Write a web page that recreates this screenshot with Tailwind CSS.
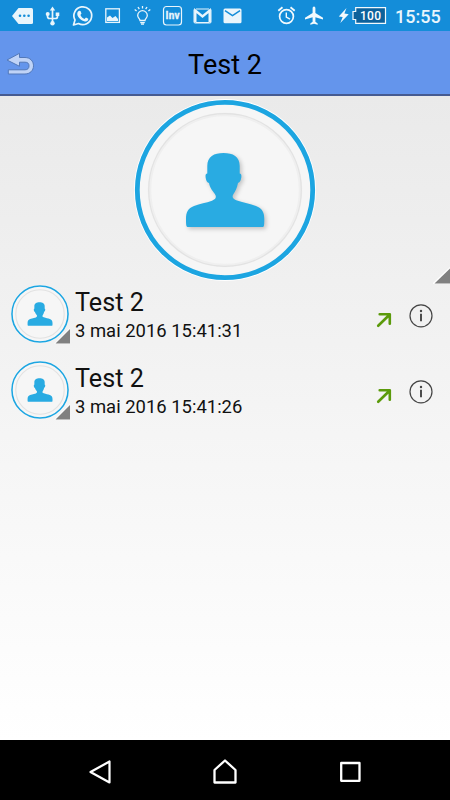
<!DOCTYPE html>
<html lang="fr">
<head>
<meta charset="utf-8">
<title>Test 2</title>
<script src="https://cdn.jsdelivr.net/npm/@tailwindcss/browser@4"></script>
</head>
<body class="w-[450px] h-[800px] overflow-hidden flex flex-col font-[Roboto,sans-serif] text-black">
<svg class="hidden">
  <defs>
    <path id="person" d="M98.500 63C89 63 82.300 66.500 82.300 76L82.300 83.500C80.500 83.500 80.300 85.500 80.700 88C81.200 91 82.200 92.800 84 93C85 98 87 100 89.500 103.500C92 107 91 109 87 110.700C81 113 75 113.500 69 116C63 118.500 61 122 61 129C61 133 61 137 62.500 137H138C139.300 137 139.300 133 139.300 129C139.300 122 137 118.500 131 116C125 113.500 119 113 112 110.500C108 109 106.500 107 108.500 104C110.500 101 112 98 113 93C115 92.500 116 90 116.300 87.500C116.600 85 116.200 83.500 114.700 83.500L114.700 76C114.700 66.500 108 63 98.500 63Z"/>
  </defs>
</svg>

<div class="h-[31px] shrink-0 bg-[#148dd9] flex items-center pl-2 text-white">
  <svg class="w-[240px] h-[31px] shrink-0" viewBox="8 0 240 31" fill="none" stroke="#e9f5fc">
    <path d="M18.500 8H31.500Q33 8 33 9.500V22.500Q33 24 31.500 24H18.500L12 16Z" fill="#e9f5fc" stroke="none"/>
    <g fill="#148dd9" stroke="none"><circle cx="20" cy="15.700" r="1.300"/><circle cx="24.300" cy="15.700" r="1.300"/><circle cx="28.600" cy="15.700" r="1.300"/></g>
    <path d="M52.500 9V23M47.500 14V16Q47.500 18.500 49.500 18.500H55.500Q57.500 18.500 57.500 16.500V14" stroke-width="1.700"/>
    <path d="M49.800 10.500L52.500 6.500L55.200 10.500ZM55.700 12.500H59.300V16H55.700Z" fill="#e9f5fc" stroke="none"/>
    <circle cx="47.700" cy="14" r="2" fill="#e9f5fc" stroke="none"/><circle cx="52.500" cy="23.300" r="2.200" fill="#e9f5fc" stroke="none"/>
    <path d="M73.500 25L75 20A8.900 8.900 0 1 1 78.500 23.500Z" stroke-width="1.700" stroke-linejoin="round"/>
    <path d="M79.200 10.800L80.500 11L81.500 13.500L80.400 15C81.300 17 82.500 18 84.500 19L86 17.600L88.300 18.800C88.300 21 86.600 21.800 85 21.500C81 20.800 78 17.500 77.300 14.500C77 12.800 78 11.200 79.200 10.800Z" fill="#e9f5fc" stroke="none"/>
    <rect x="105.800" y="8.800" width="13.600" height="13.600" stroke-width="1.300"/>
    <path d="M107 21V17.500L110 15.500L112.500 18L115.500 16L118 19V21Z" fill="#e9f5fc" stroke="none"/>
    <path d="M140 20.500C140 18.500 137.700 18 137.700 15.500A4.800 4.800 0 0 1 147.300 15.500C147.300 18 145 18.500 145 20.500Z" stroke-width="1.300"/>
    <path d="M140.200 22.700H144.800M141 24.200H144M142.500 6V8.500M138 7L139.300 9.200M147 7L145.700 9.200M134.700 9.500L136.600 11M150.300 9.500L148.400 11" stroke-width="1.300"/>
    <rect x="163.500" y="6.500" width="18" height="18.500" rx="3" stroke-width="1.200"/>
    <text x="172.500" y="19.300" text-anchor="middle" class="text-[10px] font-bold font-[Roboto,sans-serif]" fill="#e9f5fc" stroke="#e9f5fc" stroke-width=".3" textLength="14">Inv</text>
    <path d="M195.300 22.500V10.500L202.500 16.500L209.700 10.500V22.500" stroke-width="2.400"/><path d="M194 9.500V22Q194 23 195 23H210Q211 23 211 22V9.500" stroke-width="1"/><path d="M196 9H209M196 22.500H209" stroke-width="1"/>
    <rect x="223.500" y="8.500" width="18" height="14.800" rx="1.500" fill="#e9f5fc" stroke="none"/>
    <path d="M225 10.700L232.500 15.700L240 10.700" stroke="#148dd9" stroke-width="1.500"/>
  </svg>
  <svg class="ml-[27px] w-[114px] h-[31px] shrink-0" viewBox="275 0 114 31" fill="none" stroke="#f2f9fd">
    <circle cx="286.500" cy="16.500" r="6.900" stroke-width="1.700"/><path d="M286.300 12.500V17L290 19.200" stroke-width="1.400"/><path d="M278.300 10.700L282.500 7.200M294.700 10.700L290.500 7.200" stroke-width="1.800"/>
    <path d="M314 6.500C315.100 6.500 315.400 7.500 315.400 8.500V13L323 17.700V19.500L315.400 17.300V21.700L317.700 23.500V24.800L314 23.800L310.300 24.800V23.500L312.600 21.700V17.300L305 19.500V17.700L312.600 13V8.500C312.600 7.500 312.900 6.500 314 6.500Z" fill="#f2f9fd" stroke="none"/>
    <path d="M346.500 8L338.800 16.500L342.700 17L340.300 23L348.700 14.200L344.400 13.600Z" fill="#f2f9fd" stroke="none"/>
    <path d="M355.700 7.700H385.500V23.300H355.700V19.500H353V11.500H355.700Z" fill="#0d619b" stroke-width="1.200"/>
    <text x="370.500" y="20" text-anchor="middle" class="text-[12px] font-medium font-[Roboto,sans-serif]" fill="#fff" stroke="none" textLength="21">100</text>
  </svg>
  <span class="ml-[6px] text-[18px] leading-[31px] pt-[2px] font-medium text-[#e9f5fc]">15:55</span>
</div>

<header class="h-[65px] shrink-0 bg-[#6495ec] border-b-2 border-b-[#465b91] grid grid-cols-[44px_1fr_44px] items-center">
  <svg class="ml-[6px] mt-[3px] w-[30px] h-[26px]" viewBox="6 51 30 26">
    <path d="M7 60L19.500 53.300V57.500H25C30 57.500 33.500 61 33.500 65.800C33.500 70.500 30 74 25 74H8.300V69.800H25C27.700 69.800 29 68.300 29 65.800C29 63.500 27.700 62.200 25 62.200H19.500V66.300Z" fill="#bfd3f7" stroke="#5278b9" stroke-width="1"/>
  </svg>
  <h1 class="text-center text-[27px] leading-8 pt-[5px]">Test 2</h1>
</header>

<main class="h-[644px] shrink-0 bg-linear-to-b from-[#eaeaea] to-white">
  <div class="h-[189px] relative flex justify-center pt-[3px]">
    <svg class="w-[182px] h-[182px]" viewBox="9 9 182 182">
      <circle cx="100" cy="100" r="91" fill="#fff"/>
      <circle cx="100" cy="100" r="87.700" fill="#f6f6f6" stroke="#1ca5e1" stroke-width="4.800"/>
      <circle cx="100" cy="100" r="75.500" fill="none" stroke="#efefef" stroke-width="3.500"/>
      <circle cx="100" cy="100" r="76.300" fill="none" stroke="#e2e2e2" stroke-width="1.200"/>
      <use href="#person" fill="#29abe2" class="drop-shadow-[2px_2px_2px_#00000035]"/>
    </svg>
    <svg class="absolute right-0 bottom-0 w-[17px] h-[18px]" viewBox="0 0 17 18"><path d="M0 16L17 0V17H0Z" fill="#fff"/><path d="M1.500 16.500L17 1.500V16.500Z" fill="#808080"/></svg>
  </div>

  <div class="h-[76px] flex pl-[11px]">
    <div class="relative w-[59px] h-[60px]">
      <svg class="w-[58px] h-[58px]" viewBox="9 9 182 182">
        <circle cx="100" cy="100" r="91" fill="#fff"/><circle cx="100" cy="100" r="88" fill="#f6f6f6" stroke="#1ca5e1" stroke-width="4.800"/><circle cx="100" cy="100" r="76" fill="none" stroke="#e2e2e2" stroke-width="3.500"/>
        <use href="#person" fill="#29abe2"/>
      </svg>
      <svg class="absolute left-[43px] top-[43px] w-4 h-4" viewBox="0 0 16 16"><path d="M0 16L16 0V16Z" fill="#fff"/><path d="M1.500 15.500L16 1V15.500Z" fill="#808080"/></svg>
    </div>
    <div class="ml-[5px] w-[300px]">
      <p class="text-[25.200px] leading-[30px] pt-[3px] text-[#111]">Test 2</p>
      <p class="text-[18.450px] leading-[22px] pt-[2px] text-[#111]">3 mai 2016 15:41:31</p>
    </div>
    <svg class="w-[18px] h-[18px] mt-[26px]" viewBox="0 0 18 18" fill="none" stroke="#5b9a0b" stroke-width="2.600" stroke-linecap="round" stroke-linejoin="round"><path d="M4.700 3.200H14.800V12.800M14.500 3.700L3.200 14.800"/></svg>
    <svg class="ml-4 mt-[19px] w-6 h-6" viewBox="0 0 24 24"><circle cx="12" cy="11.800" r="11" fill="none" stroke="#444" stroke-width="1.200"/><path d="M12 9.800V17.300" stroke="#444" stroke-width="1.900"/><circle cx="12" cy="7" r="1.200" fill="#444"/></svg>
  </div>

  <div class="h-[76px] flex pl-[11px]">
    <div class="relative w-[59px] h-[60px]">
      <svg class="w-[58px] h-[58px]" viewBox="9 9 182 182">
        <circle cx="100" cy="100" r="91" fill="#fff"/><circle cx="100" cy="100" r="88" fill="#f6f6f6" stroke="#1ca5e1" stroke-width="4.800"/><circle cx="100" cy="100" r="76" fill="none" stroke="#e2e2e2" stroke-width="3.500"/>
        <use href="#person" fill="#29abe2"/>
      </svg>
      <svg class="absolute left-[43px] top-[43px] w-4 h-4" viewBox="0 0 16 16"><path d="M0 16L16 0V16Z" fill="#fff"/><path d="M1.500 15.500L16 1V15.500Z" fill="#808080"/></svg>
    </div>
    <div class="ml-[5px] w-[300px]">
      <p class="text-[25.200px] leading-[30px] pt-[3px] text-[#111]">Test 2</p>
      <p class="text-[18.450px] leading-[22px] pt-[2px] text-[#111]">3 mai 2016 15:41:26</p>
    </div>
    <svg class="w-[18px] h-[18px] mt-[26px]" viewBox="0 0 18 18" fill="none" stroke="#5b9a0b" stroke-width="2.600" stroke-linecap="round" stroke-linejoin="round"><path d="M4.700 3.200H14.800V12.800M14.500 3.700L3.200 14.800"/></svg>
    <svg class="ml-4 mt-[19px] w-6 h-6" viewBox="0 0 24 24"><circle cx="12" cy="11.800" r="11" fill="none" stroke="#444" stroke-width="1.200"/><path d="M12 9.800V17.300" stroke="#444" stroke-width="1.900"/><circle cx="12" cy="7" r="1.200" fill="#444"/></svg>
  </div>
</main>

<nav class="h-[60px] shrink-0 bg-black flex justify-between pl-[87px] pr-[88px] pt-[18px]">
  <svg class="w-6 h-7" viewBox="87 758 24 28" fill="none" stroke="#fff" stroke-width="2.200" stroke-linejoin="round"><path d="M109.500 761.500V782.500L90.500 772Z"/></svg>
  <svg class="w-[26px] h-7" viewBox="212 758 26 28" fill="none" stroke="#fff" stroke-width="2.300" stroke-linejoin="round"><path d="M214.500 782.500V770L225 760.500L235.500 770V782.500Z"/></svg>
  <svg class="w-6 h-7" viewBox="338 758 24 28" fill="none" stroke="#fff" stroke-width="2.300" stroke-linejoin="round"><path d="M341.200 763H359.500V780.800H341.200Z"/></svg>
</nav>
</body>
</html>
